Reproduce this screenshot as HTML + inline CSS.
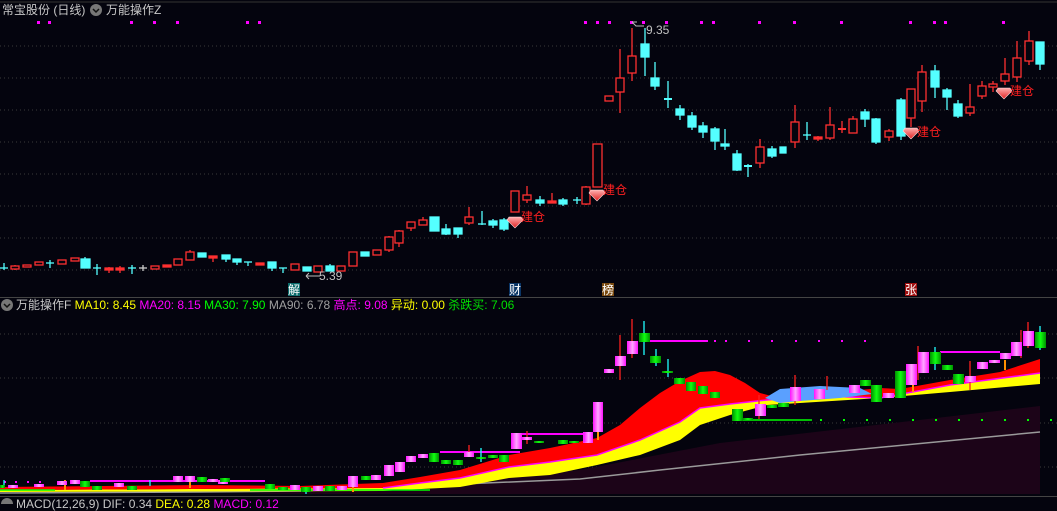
<!DOCTYPE html>
<html><head><meta charset="utf-8"><style>
html,body{margin:0;padding:0;background:#04040e;width:1057px;height:504px;overflow:hidden;font-family:"Liberation Sans","Noto Sans CJK SC",sans-serif;}
.t{position:absolute;font-size:12px;white-space:nowrap;line-height:14px;}
</style></head><body>
<svg width="1057" height="504" style="position:absolute;left:0;top:0" xmlns="http://www.w3.org/2000/svg">
<defs>
<linearGradient id="pk" x1="0" x2="1" y1="0" y2="0"><stop offset="0" stop-color="#ff10ff"/><stop offset="0.5" stop-color="#ffa8ff"/><stop offset="1" stop-color="#ff10ff"/></linearGradient>
<linearGradient id="gr" x1="0" x2="1" y1="0" y2="0"><stop offset="0" stop-color="#009000"/><stop offset="0.5" stop-color="#10ff10"/><stop offset="1" stop-color="#009000"/></linearGradient>
<linearGradient id="gem" x1="0" x2="0" y1="0" y2="1"><stop offset="0" stop-color="#ffb0b0"/><stop offset="1" stop-color="#e02020"/></linearGradient>
</defs>
<line x1="0" y1="2" x2="1057" y2="2" stroke="#333" />
<g stroke="#3a3a3a" stroke-dasharray="1,3">
<line x1="0" y1="46" x2="1057" y2="46"/><line x1="0" y1="78" x2="1057" y2="78"/><line x1="0" y1="110" x2="1057" y2="110"/><line x1="0" y1="142" x2="1057" y2="142"/><line x1="0" y1="174" x2="1057" y2="174"/><line x1="0" y1="206" x2="1057" y2="206"/><line x1="0" y1="238" x2="1057" y2="238"/><line x1="0" y1="270" x2="1057" y2="270"/>
<line x1="0" y1="334" x2="1057" y2="334"/><line x1="0" y1="378" x2="1057" y2="378"/><line x1="0" y1="423" x2="1057" y2="423"/><line x1="0" y1="467" x2="1057" y2="467"/>
</g>
<line x1="0" y1="297.5" x2="1057" y2="297.5" stroke="#444"/>
<line x1="0" y1="496.5" x2="1057" y2="496.5" stroke="#444"/>
<g fill="#ff00ff">
<rect x="37" y="21" width="3" height="3"/><rect x="48" y="21" width="3" height="3"/><rect x="130" y="21" width="3" height="3"/><rect x="153" y="21" width="3" height="3"/><rect x="176" y="21" width="3" height="3"/><rect x="246" y="21" width="3" height="3"/><rect x="258" y="21" width="3" height="3"/>
<rect x="584" y="21" width="3" height="3"/><rect x="596" y="21" width="3" height="3"/><rect x="608" y="21" width="3" height="3"/><rect x="630" y="21" width="3" height="3"/><rect x="642" y="21" width="3" height="3"/><rect x="665" y="21" width="3" height="3"/><rect x="700" y="21" width="3" height="3"/><rect x="712" y="21" width="3" height="3"/><rect x="758" y="21" width="3" height="3"/>
<rect x="793" y="21" width="3" height="3"/><rect x="840" y="21" width="3" height="3"/><rect x="909" y="21" width="3" height="3"/><rect x="933" y="21" width="3" height="3"/><rect x="944" y="21" width="3" height="3"/><rect x="1002" y="21" width="3" height="3"/>
</g>
<g stroke="#ff3030" stroke-width="1.3" fill="#04040e">
<line x1="15" y1="265" x2="15" y2="270"/><rect x="11" y="266" width="8" height="3"/>
<rect x="23" y="265" width="8" height="2"/><rect x="35" y="262" width="8" height="3"/>
<rect x="58" y="260" width="8" height="4"/><rect x="71" y="258" width="8" height="3"/>
<rect x="105" y="268" width="8" height="2" fill="#ff3030"/><line x1="109" y1="267" x2="109" y2="273"/>
<rect x="116" y="268" width="8" height="2" fill="#ff3030"/><line x1="120" y1="266" x2="120" y2="273"/>
<rect x="151" y="266" width="8" height="3"/><rect x="163" y="265" width="8" height="2" fill="#ff3030"/>
<rect x="174" y="259" width="8" height="6"/><rect x="186" y="252" width="8" height="8"/><line x1="190" y1="250" x2="190" y2="252"/>
<rect x="209" y="256" width="8" height="2" fill="#ff3030"/><line x1="213" y1="256" x2="213" y2="262"/>
<rect x="256" y="263" width="8" height="2" fill="#ff3030"/>
<rect x="291" y="264" width="8" height="6"/><rect x="314" y="266" width="8" height="6"/><rect x="337" y="266" width="8" height="5"/>
<rect x="349" y="252" width="8" height="14"/><rect x="373" y="250" width="8" height="5"/>
<line x1="389" y1="236" x2="389" y2="252"/><rect x="385" y="237" width="8" height="13"/>
<line x1="399" y1="230" x2="399" y2="247"/><rect x="395" y="231" width="8" height="12"/>
<line x1="411" y1="222" x2="411" y2="231"/><rect x="407" y="222" width="8" height="6"/>
<line x1="423" y1="217" x2="423" y2="225"/><rect x="419" y="220" width="8" height="5"/>
<line x1="469" y1="207" x2="469" y2="225"/><rect x="465" y="217" width="8" height="6"/>
<rect x="511" y="191" width="8" height="21"/>
<line x1="527" y1="186" x2="527" y2="203"/><rect x="523" y="195" width="8" height="5"/>
<line x1="552" y1="193" x2="552" y2="203"/><rect x="548" y="201" width="8" height="2" fill="#ff3030"/>
<line x1="586" y1="186" x2="586" y2="205"/><rect x="582" y="187" width="8" height="17"/>
<rect x="593" y="144" width="9" height="43"/>
<rect x="605" y="96" width="8" height="5"/>
<line x1="620" y1="49" x2="620" y2="113"/><rect x="616" y="78" width="8" height="14"/>
<line x1="632" y1="28" x2="632" y2="81"/><rect x="628" y="56" width="8" height="17"/>
<line x1="760" y1="139" x2="760" y2="168"/><rect x="756" y="147" width="8" height="16"/>
<line x1="795" y1="105" x2="795" y2="148"/><rect x="791" y="122" width="8" height="20"/>
<rect x="814" y="137" width="8" height="2" fill="#ff3030"/><line x1="818" y1="136" x2="818" y2="141"/>
<line x1="830" y1="107" x2="830" y2="140"/><rect x="826" y="125" width="8" height="13"/>
<line x1="842" y1="121" x2="842" y2="133"/><line x1="838" y1="129" x2="846" y2="129" stroke-width="2"/>
<line x1="853" y1="116" x2="853" y2="133"/><rect x="849" y="119" width="8" height="14"/>
<line x1="889" y1="129" x2="889" y2="141"/><rect x="885" y="131" width="8" height="6"/>
<line x1="911" y1="89" x2="911" y2="127"/><rect x="907" y="89" width="8" height="29"/>
<line x1="922" y1="65" x2="922" y2="112"/><rect x="918" y="72" width="8" height="29"/>
<line x1="970" y1="84" x2="970" y2="116"/><rect x="966" y="107" width="8" height="6"/>
<line x1="982" y1="81" x2="982" y2="99"/><rect x="978" y="86" width="8" height="10"/>
<line x1="993" y1="81" x2="993" y2="92"/><rect x="989" y="84" width="8" height="3"/>
<line x1="1005" y1="58" x2="1005" y2="85"/><rect x="1001" y="74" width="8" height="7"/>
<line x1="1017" y1="41" x2="1017" y2="82"/><rect x="1013" y="58" width="8" height="19"/>
<line x1="1029" y1="31" x2="1029" y2="65"/><rect x="1025" y="41" width="8" height="20"/>
</g>
<g stroke="#54ffff" stroke-width="1.3" fill="#54ffff">
<line x1="4" y1="263" x2="4" y2="270"/><line x1="0" y1="268" x2="8" y2="268"/>
<line x1="50" y1="260" x2="50" y2="268"/><line x1="46" y1="263" x2="54" y2="263"/>
<rect x="81" y="259" width="9" height="9"/><line x1="85" y1="257" x2="85" y2="259"/>
<line x1="97" y1="264" x2="97" y2="275"/><line x1="93" y1="268" x2="101" y2="268"/>
<line x1="132" y1="265" x2="132" y2="274"/><line x1="128" y1="268" x2="136" y2="268"/>
<line x1="143" y1="265" x2="143" y2="271" stroke="#ccc"/><line x1="139" y1="268" x2="147" y2="268" stroke="#ccc"/>
<rect x="198" y="253" width="8" height="4"/><rect x="222" y="255" width="8" height="4"/><line x1="226" y1="259" x2="226" y2="262"/>
<rect x="233" y="259" width="8" height="3"/><line x1="237" y1="262" x2="237" y2="265"/>
<line x1="244" y1="262" x2="252" y2="262"/><line x1="248" y1="262" x2="248" y2="266"/>
<rect x="268" y="262" width="8" height="6"/><line x1="272" y1="268" x2="272" y2="271"/>
<line x1="279" y1="268" x2="287" y2="268"/><line x1="283" y1="268" x2="283" y2="273"/>
<rect x="303" y="267" width="8" height="4"/><rect x="326" y="266" width="8" height="5"/><line x1="330" y1="264" x2="330" y2="267"/>
<rect x="361" y="252" width="8" height="4"/>
<rect x="430" y="217" width="9" height="14"/>
<rect x="442" y="229" width="8" height="5"/><line x1="446" y1="224" x2="446" y2="235"/>
<rect x="454" y="228" width="8" height="6"/><line x1="458" y1="234" x2="458" y2="238"/>
<line x1="482" y1="211" x2="482" y2="225"/><line x1="478" y1="224" x2="486" y2="224"/>
<rect x="489" y="221" width="8" height="4"/><line x1="493" y1="219" x2="493" y2="228"/>
<rect x="500" y="220" width="8" height="9"/><line x1="504" y1="218" x2="504" y2="231"/>
<rect x="536" y="200" width="8" height="3"/><line x1="540" y1="196" x2="540" y2="206"/>
<rect x="559" y="200" width="8" height="4"/><line x1="563" y1="198" x2="563" y2="206"/>
<line x1="577" y1="197" x2="577" y2="204"/><line x1="573" y1="200" x2="581" y2="200"/>
<rect x="641" y="44" width="8" height="13"/><line x1="645" y1="28" x2="645" y2="76"/>
<rect x="651" y="78" width="8" height="8"/><line x1="655" y1="62" x2="655" y2="90"/>
<line x1="668" y1="81" x2="668" y2="108"/><line x1="664" y1="99" x2="672" y2="99" stroke-width="2"/>
<rect x="676" y="109" width="8" height="6"/><line x1="680" y1="105" x2="680" y2="120"/>
<rect x="688" y="116" width="8" height="11"/><line x1="692" y1="112" x2="692" y2="130"/>
<rect x="699" y="126" width="8" height="6"/><line x1="703" y1="122" x2="703" y2="138"/>
<rect x="711" y="129" width="8" height="12"/><line x1="715" y1="127" x2="715" y2="150"/>
<line x1="725" y1="129" x2="725" y2="150"/><rect x="721" y="144" width="8" height="2"/>
<rect x="733" y="154" width="8" height="16"/><line x1="737" y1="150" x2="737" y2="171"/>
<line x1="748" y1="164" x2="748" y2="177"/><line x1="744" y1="166" x2="752" y2="166" stroke-width="2"/>
<rect x="768" y="149" width="8" height="7"/><line x1="772" y1="146" x2="772" y2="158"/>
<rect x="780" y="147" width="6" height="6"/>
<line x1="807" y1="122" x2="807" y2="140"/><line x1="803" y1="135" x2="811" y2="135"/>
<rect x="861" y="112" width="8" height="7"/><line x1="865" y1="109" x2="865" y2="127"/>
<rect x="872" y="119" width="8" height="23"/><line x1="876" y1="118" x2="876" y2="144"/>
<rect x="897" y="100" width="8" height="36"/><line x1="901" y1="98" x2="901" y2="140"/>
<rect x="931" y="71" width="8" height="16"/><line x1="935" y1="65" x2="935" y2="98"/>
<rect x="943" y="90" width="8" height="7"/><line x1="947" y1="88" x2="947" y2="110"/>
<rect x="954" y="104" width="8" height="12"/><line x1="958" y1="100" x2="958" y2="118"/>
<rect x="1036" y="42" width="8" height="22"/><line x1="1040" y1="64" x2="1040" y2="70"/>
</g>
<g fill="url(#gem)" stroke="#ffdddd" stroke-width="0.6">
<path d="M509 217 h12 l2 3 -8 8 -8 -8z"/><path d="M591 190 h12 l2 3 -8 8 -8 -8z"/><path d="M905 128 h12 l2 3 -8 8 -8 -8z"/><path d="M998 88 h12 l2 3 -8 8 -8 -8z"/>
</g>
<g stroke="#bbb" fill="none"><path d="M632 22 h5 M632 22 l4 4 h8"/><path d="M306 276 h14 M306 276 l3 -3 M306 276 l3 3"/></g>
<rect x="288" y="283" width="12" height="13" fill="#0a6a6a"/><rect x="509" y="283" width="12" height="13" fill="#0a3566"/><rect x="602" y="283" width="12" height="13" fill="#7a4a10"/><rect x="905" y="283" width="12" height="13" fill="#a01010"/>

<polygon fill="#1c0418" points="250,494 580,470 720,443 1040,406 1040,494"/>
<polyline fill="none" stroke="#9a9a9a" stroke-width="1.5" points="0,493 200,492 300,491 580,479 660,470 800,455 1040,432"/>
<polygon fill="#ffff00" points="0,490 383,488 420,483 460,478 509,467 550,462 597,455 640,440 680,422 700,408 730,404 767,400 820,396 880,398 950,385 1040,373 1040,384 950,392 880,398 800,403 767,405 730,415 700,425 680,440 640,455 597,465 550,475 509,478 460,487 383,491 0,492"/>
<polygon fill="#ff0000" points="0,487 200,485 300,486 383,483 420,477 460,470 509,455 550,448 597,438 620,425 640,408 660,393 680,381 700,372 715,371 730,375 745,383 760,393 775,397 800,395 850,391 880,388 900,389 950,380 1000,372 1040,359 1040,373 950,385 880,398 820,396 767,400 730,404 700,408 680,422 640,440 597,455 550,462 509,467 460,478 420,483 383,488 0,490"/>
<polyline fill="none" stroke="#ff00ff" stroke-width="1.5" points="383,488 420,483 460,478 509,467 550,462 597,455 640,440 680,422 700,408 730,404 767,400 820,396 880,398 950,385 1040,373"/>
<polygon fill="#5aa0ff" points="765,398 780,389 820,386 860,388 872,394 840,398 800,401 780,403"/>
<g stroke="#ff00ff" stroke-width="2">
<line x1="650" y1="341" x2="708" y2="341"/><line x1="520" y1="434" x2="590" y2="434"/><line x1="440" y1="452" x2="520" y2="452"/><line x1="90" y1="481" x2="265" y2="481"/><line x1="940" y1="352" x2="1000" y2="352"/>
</g>
<g fill="#ff00ff"><rect x="714" y="340" width="2" height="2"/><rect x="725" y="340" width="2" height="2"/><rect x="748" y="340" width="2" height="2"/><rect x="771" y="340" width="2" height="2"/><rect x="795" y="340" width="2" height="2"/><rect x="818" y="340" width="2" height="2"/><rect x="841" y="340" width="2" height="2"/><rect x="864" y="340" width="2" height="2"/><rect x="4" y="481" width="2" height="2"/><rect x="15" y="481" width="2" height="2"/><rect x="27" y="481" width="2" height="2"/><rect x="39" y="481" width="2" height="2"/></g>
<g stroke="#00ff00" stroke-width="1.5"><line x1="740" y1="420" x2="812" y2="420"/><line x1="0" y1="490" x2="55" y2="490"/><line x1="250" y1="490" x2="430" y2="490"/></g>
<g fill="#00ff00"><rect x="820" y="419" width="2" height="2"/><rect x="843" y="419" width="2" height="2"/><rect x="866" y="419" width="2" height="2"/><rect x="889" y="419" width="2" height="2"/><rect x="912" y="419" width="2" height="2"/><rect x="935" y="419" width="2" height="2"/><rect x="958" y="419" width="2" height="2"/><rect x="981" y="419" width="2" height="2"/><rect x="1004" y="419" width="2" height="2"/><rect x="1027" y="419" width="2" height="2"/><rect x="1050" y="419" width="2" height="2"/></g>
<g stroke-width="1.3">
<line x1="620" y1="335" x2="620" y2="380" stroke="#ff2020"/><line x1="632" y1="319" x2="632" y2="358" stroke="#ff2020"/>
<line x1="644" y1="321" x2="644" y2="355" stroke="#20ffff"/><line x1="656" y1="349" x2="656" y2="366" stroke="#20ffff"/><line x1="668" y1="359" x2="668" y2="377" stroke="#20ffff"/>
<line x1="795" y1="375" x2="795" y2="405" stroke="#ff2020"/><line x1="759" y1="395" x2="759" y2="419" stroke="#ff2020"/><line x1="827" y1="376" x2="827" y2="390" stroke="#ff2020"/>
<line x1="1021" y1="330" x2="1021" y2="358" stroke="#ff2020"/><line x1="1028" y1="322" x2="1028" y2="348" stroke="#ff2020"/><line x1="1040" y1="326" x2="1040" y2="350" stroke="#20ffff"/>
<line x1="918" y1="346" x2="918" y2="380" stroke="#ff2020"/><line x1="935" y1="347" x2="935" y2="370" stroke="#20ffff"/><line x1="970" y1="361" x2="970" y2="390" stroke="#ff2020"/>
<line x1="527" y1="431" x2="527" y2="444" stroke="#ff2020"/><line x1="481" y1="448" x2="481" y2="462" stroke="#20ffff"/><line x1="469" y1="445" x2="469" y2="457" stroke="#ff2020"/>
<line x1="306" y1="487" x2="306" y2="494" stroke="#20ffff"/><line x1="150" y1="480" x2="150" y2="486" stroke="#20ffff"/><line x1="4" y1="480" x2="4" y2="486" stroke="#20ffff"/>
<line x1="598" y1="426" x2="598" y2="440" stroke="#ff9000" stroke-width="2"/><line x1="353" y1="487" x2="353" y2="492" stroke="#ff9000" stroke-width="2"/><line x1="65" y1="480" x2="65" y2="490" stroke="#ff9000" stroke-width="2"/><line x1="190" y1="480" x2="190" y2="488" stroke="#ff9000" stroke-width="2"/><line x1="1005" y1="360" x2="1005" y2="370" stroke="#ff9000" stroke-width="2"/><line x1="913" y1="385" x2="913" y2="392" stroke="#ff9000" stroke-width="2"/>
</g>
<g fill="url(#pk)">
<rect x="583" y="432" width="10" height="11"/><rect x="593" y="402" width="10" height="30"/><rect x="604" y="369" width="10" height="4"/><rect x="615" y="356" width="11" height="10"/><rect x="627" y="341" width="11" height="13"/>
<rect x="755" y="404" width="11" height="12"/><rect x="790" y="387" width="11" height="14"/><rect x="814" y="389" width="11" height="10"/><rect x="849" y="385" width="11" height="8"/><rect x="883" y="393" width="11" height="5"/>
<rect x="906" y="364" width="11" height="21"/><rect x="918" y="352" width="11" height="21"/><rect x="965" y="376" width="11" height="6"/><rect x="977" y="362" width="11" height="7"/><rect x="989" y="360" width="11" height="3"/><rect x="1000" y="353" width="11" height="6"/><rect x="1011" y="342" width="11" height="14"/><rect x="1023" y="331" width="11" height="15"/>
<rect x="511" y="433" width="11" height="16"/><rect x="522" y="437" width="10" height="3"/><rect x="584" y="432" width="9" height="10"/>
<rect x="464" y="452" width="10" height="5"/><rect x="406" y="456" width="10" height="6"/><rect x="418" y="454" width="10" height="4"/><rect x="395" y="462" width="10" height="10"/><rect x="384" y="465" width="10" height="11"/><rect x="371" y="475" width="10" height="5"/><rect x="348" y="476" width="10" height="11"/>
<rect x="337" y="486" width="10" height="4"/><rect x="313" y="486" width="10" height="5"/><rect x="290" y="485" width="10" height="5"/>
<rect x="208" y="479" width="10" height="3"/><rect x="173" y="476" width="10" height="6"/><rect x="185" y="476" width="10" height="6"/><rect x="218" y="480" width="10" height="4"/>
<rect x="8" y="485" width="10" height="3"/><rect x="34" y="484" width="10" height="3"/><rect x="57" y="481" width="10" height="4"/><rect x="70" y="480" width="10" height="4"/><rect x="114" y="483" width="10" height="4"/>
</g>
<g fill="url(#gr)">
<rect x="639" y="333" width="11" height="9"/><rect x="650" y="356" width="11" height="7"/><rect x="662" y="371" width="11" height="2"/><rect x="674" y="378" width="11" height="6"/><rect x="686" y="382" width="10" height="9"/><rect x="698" y="386" width="10" height="8"/><rect x="710" y="392" width="10" height="6"/>
<rect x="732" y="409" width="11" height="12"/><rect x="743" y="418" width="10" height="2"/><rect x="767" y="405" width="10" height="3"/><rect x="778" y="403" width="11" height="4"/><rect x="860" y="380" width="11" height="6"/><rect x="871" y="385" width="11" height="17"/><rect x="895" y="371" width="11" height="27"/>
<rect x="930" y="352" width="11" height="12"/><rect x="942" y="365" width="11" height="5"/><rect x="953" y="374" width="11" height="10"/><rect x="1035" y="332" width="11" height="16"/>
<rect x="429" y="453" width="10" height="9"/><rect x="441" y="460" width="10" height="4"/><rect x="453" y="460" width="10" height="5"/><rect x="476" y="457" width="10" height="2"/><rect x="488" y="455" width="10" height="3"/><rect x="499" y="455" width="10" height="7"/>
<rect x="534" y="441" width="10" height="2"/><rect x="558" y="440" width="10" height="4"/><rect x="569" y="441" width="10" height="2"/>
<rect x="361" y="476" width="10" height="4"/><rect x="325" y="486" width="10" height="5"/><rect x="301" y="487" width="10" height="5"/><rect x="265" y="484" width="10" height="5"/><rect x="278" y="487" width="10" height="3"/>
<rect x="197" y="477" width="10" height="5"/><rect x="220" y="478" width="10" height="4"/><rect x="80" y="481" width="10" height="6"/><rect x="92" y="486" width="10" height="4"/><rect x="127" y="486" width="10" height="4"/><rect x="0" y="485" width="5" height="3"/>
</g>
<circle cx="96" cy="10" r="6" fill="#777"/><path d="M93 9 l3 3 3 -3" stroke="#111" stroke-width="1.5" fill="none"/>
<circle cx="7" cy="305" r="6" fill="#777"/><path d="M4 304 l3 3 3 -3" stroke="#111" stroke-width="1.5" fill="none"/>
<circle cx="7" cy="504" r="6" fill="#777"/>
</svg>
<div class="t" style="left:2px;top:3px;color:#c8c8c8">常宝股份 (日线)</div>
<div class="t" style="left:106px;top:3px;color:#c8c8c8">万能操作Z</div>
<div class="t" style="left:646px;top:23px;color:#c0c0c0">9.35</div>
<div class="t" style="left:319px;top:269px;color:#c0c0c0">5.39</div>
<div class="t" style="left:521px;top:210px;color:#ff2020">建仓</div>
<div class="t" style="left:603px;top:183px;color:#ff2020">建仓</div>
<div class="t" style="left:917px;top:125px;color:#ff2020">建仓</div>
<div class="t" style="left:1010px;top:84px;color:#ff2020">建仓</div>
<div class="t" style="left:288px;top:283px;color:#fff">解</div>
<div class="t" style="left:509px;top:283px;color:#fff">财</div>
<div class="t" style="left:602px;top:283px;color:#fff">榜</div>
<div class="t" style="left:905px;top:283px;color:#fff">张</div>
<div class="t" style="left:16px;top:298px;color:#c8c8c8">万能操作F <span style="color:#ffff00">MA10: 8.45</span> <span style="color:#ff00ff">MA20: 8.15</span> <span style="color:#00ff00">MA30: 7.90</span> <span style="color:#a0a0a0">MA90: 6.78</span> <span style="color:#ff00ff">高点: 9.08</span> <span style="color:#ffff00">异动: 0.00</span> <span style="color:#00e000">杀跌买: 7.06</span></div>
<div class="t" style="left:16px;top:497px;color:#c8c8c8">MACD(12,26,9) DIF: 0.34 <span style="color:#ffff00">DEA: 0.28</span> <span style="color:#ff00ff">MACD: 0.12</span></div>
</body></html>
